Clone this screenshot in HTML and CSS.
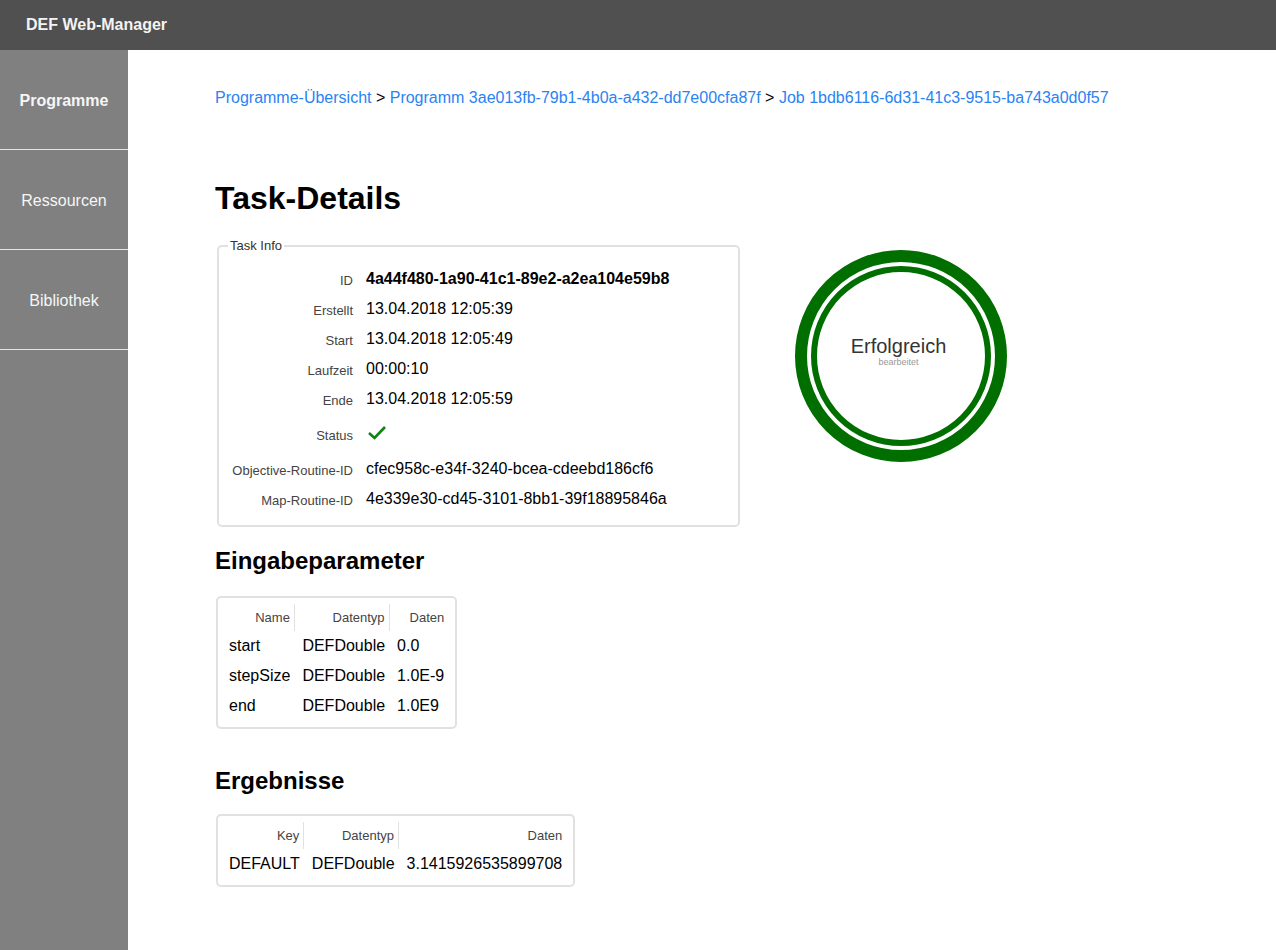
FILE: index.html
```html
<!DOCTYPE html>
<html lang="de">
<head>
<meta charset="utf-8">
<title>DEF Web-Manager</title>
<link rel="stylesheet" href="styles.css">
</head>
<body>
<header class="topbar">DEF Web-Manager</header>
<div class="layout">
  <nav class="sidebar">
    <a class="nav-item active">Programme</a>
    <a class="nav-item">Ressourcen</a>
    <a class="nav-item">Bibliothek</a>
  </nav>
  <main class="content">
    <div class="breadcrumb">
      <a class="crumb">Programme-Übersicht</a> &gt; <a class="crumb">Programm 3ae013fb-79b1-4b0a-a432-dd7e00cfa87f</a> &gt; <a class="crumb">Job 1bdb6116-6d31-41c3-9515-ba743a0d0f57</a>
    </div>
    <h1 class="title">Task-Details</h1>
    <div class="info-row">
      <fieldset class="task-info">
        <legend class="legend">Task Info</legend>
        <div class="info-grid">
          <div class="lbl">ID</div><div class="val bold">4a44f480-1a90-41c1-89e2-a2ea104e59b8</div>
          <div class="lbl">Erstellt</div><div class="val">13.04.2018 12:05:39</div>
          <div class="lbl">Start</div><div class="val">13.04.2018 12:05:49</div>
          <div class="lbl">Laufzeit</div><div class="val">00:00:10</div>
          <div class="lbl">Ende</div><div class="val">13.04.2018 12:05:59</div>
          <div class="lbl">Status</div><div class="val"><svg class="check" width="20" height="16" viewBox="0 0 20 16"><polyline points="2,8 7.5,13 18,2" fill="none" stroke="#118311" stroke-width="2.6"/></svg></div>
          <div class="lbl">Objective-Routine-ID</div><div class="val">cfec958c-e34f-3240-bcea-cdeebd186cf6</div>
          <div class="lbl">Map-Routine-ID</div><div class="val">4e339e30-cd45-3101-8bb1-39f18895846a</div>
        </div>
      </fieldset>
      <div class="status-ring">
        <div class="ring-inner">
          <div class="ring-title">Erfolgreich</div>
          <div class="ring-sub">bearbeitet</div>
        </div>
      </div>
    </div>

    <h2 class="section">Eingabeparameter</h2>
    <div class="table-box">
      <table class="data">
        <thead>
          <tr><th>Name</th><th>Datentyp</th><th>Daten</th></tr>
        </thead>
        <tbody>
          <tr><td>start</td><td>DEFDouble</td><td>0.0</td></tr>
          <tr><td>stepSize</td><td>DEFDouble</td><td>1.0E-9</td></tr>
          <tr><td>end</td><td>DEFDouble</td><td>1.0E9</td></tr>
        </tbody>
      </table>
    </div>

    <h2 class="section second">Ergebnisse</h2>
    <div class="table-box second">
      <table class="data">
        <thead>
          <tr><th>Key</th><th>Datentyp</th><th>Daten</th></tr>
        </thead>
        <tbody>
          <tr><td>DEFAULT</td><td>DEFDouble</td><td>3.1415926535899708</td></tr>
        </tbody>
      </table>
    </div>
  </main>
</div>
</body>
</html>
```

FILE: styles.css
```css
* { box-sizing: border-box; }
html, body { margin: 0; padding: 0; }
body {
  font-family: "Liberation Sans", Arial, Helvetica, sans-serif;
  color: #000;
  background: #fff;
  width: 1276px;
  height: 950px;
  overflow: hidden;
}
.topbar {
  height: 50px;
  background: #505050;
  color: #f4f4f4;
  font-weight: bold;
  font-size: 16px;
  line-height: 50px;
  padding-left: 26px;
}
.layout {
  display: flex;
  height: 900px;
}
.sidebar {
  width: 128px;
  flex: none;
  background: #808080;
  display: flex;
  flex-direction: column;
}
.nav-item {
  height: 100px;
  border-bottom: 1px solid #e6e6e6;
  color: #f6f6f6;
  font-size: 16px;
  display: flex;
  align-items: center;
  justify-content: center;
  padding-top: 3px;
}
.nav-item.active { font-weight: bold; }
.content {
  flex: 1;
  padding: 38px 0 0 87px;
}
.breadcrumb {
  font-size: 16px;
  line-height: 20px;
  height: 20px;
}
.crumb { color: #2a83f3; }
.title {
  margin: 72px 0 0 0;
  font-size: 32px;
  line-height: 36px;
  font-weight: bold;
}
.info-row {
  display: flex;
  align-items: flex-start;
  margin-top: 23px;
}
.task-info {
  margin: 0 0 0 2px;
  width: 523px;
  border: 2px solid #e1e1e1;
  border-radius: 5px;
  padding: 11px 10px 11px 12px;
}
.legend {
  font-size: 13px;
  line-height: 14px;
  color: #333;
  padding: 0 2px;
  margin-left: -3px;
}
.info-grid {
  display: grid;
  grid-template-columns: 122px 1fr;
  grid-template-rows: repeat(5, 30px) 40px 30px 30px;
  column-gap: 13px;
}
.lbl {
  font-size: 13px;
  color: #444;
  text-align: right;
  display: flex;
  align-items: center;
  justify-content: flex-end;
  padding-top: 2px;
}
.val {
  font-size: 16px;
  display: flex;
  align-items: center;
}
.val.bold { font-weight: bold; }
.check { margin-left: 1px; margin-top: -2px; }
.status-ring {
  margin: 11px 0 0 55px;
  width: 212px;
  height: 212px;
  border-radius: 50%;
  border: 12px solid #006f00;
  padding: 4px;
  flex: none;
}
.ring-inner {
  width: 100%;
  height: 100%;
  border-radius: 50%;
  border: 6px solid #006f00;
  display: flex;
  flex-direction: column;
  align-items: center;
  justify-content: center;
  padding: 0 5px 10px 0;
}
.ring-title {
  font-size: 20px;
  line-height: 22px;
  color: #333;
}
.ring-sub {
  font-size: 9px;
  line-height: 10px;
  color: #999;
}
.section {
  margin: 20px 0 0 0;
  font-size: 24px;
  line-height: 28px;
  font-weight: bold;
}
.section.second { margin-top: 34px; }
.table-box {
  display: inline-block;
  margin: 21px 0 0 1px;
  border: 2px solid #e1e1e1;
  border-radius: 5px;
  padding: 6px 7px 6px 3px;
}
.table-box.second { margin-top: 19px; }
.data {
  border-collapse: collapse;
}
.data th {
  font-size: 13px;
  font-weight: normal;
  color: #444;
  text-align: right;
  height: 27px;
  padding: 0 4px 0 8px;
  vertical-align: middle;
}
.data th + th { border-left: 1px solid #e1e1e1; }
.data td {
  font-size: 16px;
  height: 30px;
  padding: 0 4px 0 8px;
  white-space: nowrap;
  vertical-align: middle;
}
```
